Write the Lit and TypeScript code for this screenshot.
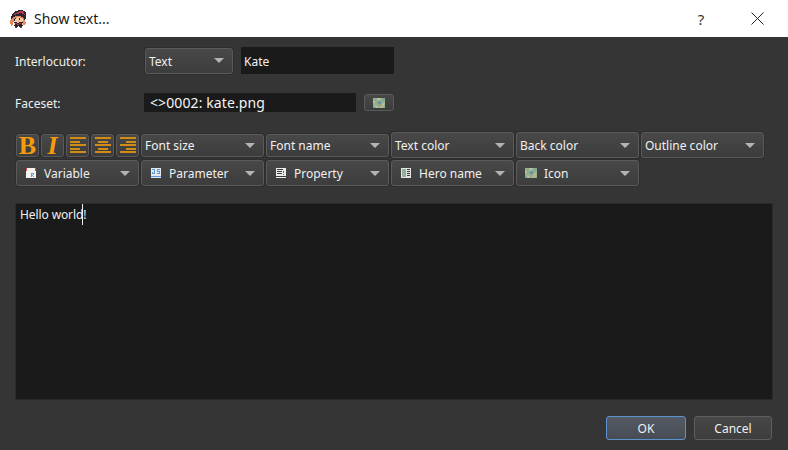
import { LitElement, html, css, svg } from 'lit';
import { customElement } from 'lit/decorators.js';

// pixel sprite helper: each char of a row maps to a palette colour
const sprite = (rows: string[], palette: Record<string, string>) =>
  rows.map((row, y) =>
    [...row].map((c, x) =>
      palette[c] ? svg`<rect x=${x} y=${y} width="1" height="1" fill=${palette[c]}></rect>` : null));

const KATE = sprite([
  '........kkkkk.....',
  '.....kkkkrrrrkk...',
  '....kkkrrrrrrrkk..',
  '...kkrrrrkkkrrkk..',
  '..kkrrkkkkkkkkrk..',
  '..kkkkkkkkkkkkkk..',
  '.kkkkooooookkkkk..',
  '.kkoooofffoookkk..',
  '.koookfffkffookk..',
  '.oookffffkfffok...',
  'ooookffffffffoo...',
  'oooo.fffpfffooo...',
  'ooo.kkkffkkkkooo..',
  'ooo.frrkkrrkfooo..',
  '.oo.fkkrrkkkfoo...',
  '.o..kkkkkkkkk.....',
  '.....kkk.kkk......',
  '.....dd...dd......',
], { k: '#2a2430', d: '#5a4a58', r: '#b83a48', f: '#f6cda6', o: '#e5875f', p: '#d89078' });

const VARIABLE = sprite([
  'rwwwwwwwwr',
  'rwwwwwwwwr',
  'rwwwwwwwwr',
  'wwwwwwwwww',
  'wwwwwwwwww',
  'wwwwwbbbww',
  'wwwwwbwbww',
  'wwwwwbbwww',
  'wwwwwbwbww',
  'wwwwwwwwww',
], { w: '#f6f2ee', r: '#d04848', b: '#6a9cd0' });

const PARAMETER = sprite([
  'wwwwwwwwww',
  'wbbbwwbbbw',
  'wwwbwwbwww',
  'wwwbwwbbbw',
  'wbwbwwwwbw',
  'wbbbwwbbbw',
  'wwwwwwwwww',
  'wwwwwwwwww',
  'bbbbbbbbbb',
  'wwwwwwwwww',
], { w: '#e4e9ee', b: '#5a9ad8' });

const PROPERTY = sprite([
  'wwwwwwwwww',
  'wkkkkkkwww',
  'wwwwwwwwww',
  'wkkkkkwrww',
  'wwwwwwwrww',
  'wkkkkkwwww',
  'wwwwwwwrww',
  'wwwwwwwwww',
  'kkkkkkkkkk',
  'wwwwwwwwww',
], { w: '#ececec', k: '#3a3a3a', r: '#c83838' });

const HERO = sprite([
  'wwwwwwwwww',
  'wggggwkkkw',
  'wggggwwwww',
  'wggggwkkkw',
  'wggggwwwww',
  'wggggwkkkw',
  'wggggwwwww',
  'wggggwkkkw',
  'wggggwwwww',
  'wwwwwwwwww',
], { w: '#e4e4e4', k: '#3a3a3a', g: '#8fb09a' });

const MAP = sprite([
  'gggghhhgggss',
  'ggggghhggsss',
  'ysggggggggsg',
  'yysgggbbgggg',
  'yyggbbbbgggg',
  'gggggbbbggyy',
  'ggggggbggyyg',
  'shgggggggygg',
  'sshhgggggyyg',
  'ssshgggyyggg',
], { g: '#93b18e', h: '#b6c9a0', s: '#7ea59c', y: '#cdbd82', b: '#6d91a6' });

const pixelIcon = (content: unknown, w = 10, h = 10) => html`
  <svg class="pix" width=${w} height=${h} viewBox="0 0 ${w} ${h}" shape-rendering="crispEdges">${content}</svg>`;

@customElement('app-root')
export class AppRoot extends LitElement {
  static styles = css`
    :host {
      display: flex;
      flex-direction: column;
      width: 788px;
      height: 450px;
      background: #353535;
      color: #f0f0f0;
      font-family: "Noto Sans", "Open Sans", sans-serif;
      font-size: 12px;
      overflow: hidden;
    }
    .titlebar {
      display: flex;
      align-items: center;
      height: 37px;
      flex: none;
      background: #fff;
      color: #1a1a1a;
      font-size: 14px;
      padding-left: 10px;
    }
    .titlebar .title { margin-left: 6px; flex: 1; }
    .titlebar .help { width: 16px; text-align: center; font-size: 15px; margin-right: 42px; color: #333; }
    .titlebar .close { margin-right: 24px; display: block; }
    .form {
      flex: 1;
      display: flex;
      flex-direction: column;
      padding: 10px 15px 10px 15px;
    }
    .row { display: flex; align-items: center; }
    .row .label { width: 130px; padding-top: 2px; }
    .interlocutor { height: 27px; }
    .faceset { height: 19px; margin-top: 19px; }
    .combo, .tool {
      box-sizing: border-box;
      border: 1px solid #5a5a5a;
      border-radius: 3px;
      background: linear-gradient(#484848, #3c3c3c);
      box-shadow: 0 0 0 1px #2e2e2e;
    }
    .combo {
      display: flex;
      align-items: center;
      height: 26px;
      padding-left: 3px;
      padding-right: 8px;
      white-space: nowrap;
    }
    .combo .arrow {
      margin-left: auto;
      width: 0;
      height: 0;
      border-left: 5px solid transparent;
      border-right: 5px solid transparent;
      border-top: 5px solid #b4b4b4;
    }
    .combo.small { height: 23px; }
    .combo .pix { margin: 0 8px 0 6px; }
    .combo .pix.wide { margin: 0 7px 0 5px; }
    .who { width: 88px; padding-top: 2px; }
    .who .arrow { margin-top: -2px; }
    .field {
      box-sizing: border-box;
      background: #1a1a1a;
      color: #f4f4f4;
    }
    .name { width: 153px; height: 27px; margin-left: 8px; line-height: 29px; padding-left: 3px; font-size: 12px; }
    .face {
      width: 212px;
      height: 19px;
      margin-left: -1px;
      line-height: 19px;
      padding-left: 6px;
      font-size: 14px;
      letter-spacing: 0.1px;
      white-space: nowrap;
    }
    .pick {
      box-sizing: border-box;
      display: flex;
      align-items: center;
      justify-content: center;
      width: 30px;
      height: 17px;
      margin-left: 8px;
      border: 1px solid #5a5a5a;
      border-radius: 3px;
      background: linear-gradient(#484848, #3c3c3c);
    }
    .toolbar {
      display: grid;
      grid-template-columns: repeat(6, 123px);
      column-gap: 2px;
      row-gap: 2px;
      margin: 20px 0 0 1px;
      align-items: center;
    }
    .styles { display: flex; gap: 2px; }
    .tool {
      display: flex;
      align-items: center;
      justify-content: center;
      width: 23px;
      height: 23px;
      color: #f59b0d;
    }
    .tool.b { font: bold 26px/23px "Liberation Serif", serif; }
    .tool.i { font: italic bold 26px/23px "Liberation Serif", serif; }
    .tool svg { display: block; }
    .editor {
      box-sizing: border-box;
      height: 197px;
      margin-top: 17px;
      padding: 3px 4px;
      background: #1a1a1a;
      border: 1px solid #2a2a2a;
      line-height: 16px;
      letter-spacing: -0.1px;
      width: 758px;
    }
    .editor .caret { border-left: 1px solid #f0f0f0; margin-left: -1px; padding: 2px 0; }
    .actions { display: flex; justify-content: flex-end; gap: 8px; margin: 16px 1px 0 0; }
    .btn {
      box-sizing: border-box;
      height: 24px;
      border: 1px solid #5e5e5e;
      border-radius: 3px;
      background: linear-gradient(#474747, #3d3d3d);
      text-align: center;
      line-height: 23px;
      width: 78px;
    }
    .btn.ok {
      width: 80px;
      border-color: #5a94d0;
      background: linear-gradient(#545a64, #474c54);
    }
  `;

  private _combo(label: string, icon?: unknown, small = false, cls = '') {
    return html`<div class="combo ${small ? 'small' : ''} ${cls}">
      ${icon ? pixelIcon(icon) : null}<span>${label}</span><span class="arrow"></span>
    </div>`;
  }

  private _align(lines: number[][]) {
    return html`<div class="tool">
      <svg width="16" height="16" viewBox="0 0 16 16" shape-rendering="crispEdges">
        ${lines.map(([x, w], i) => svg`<rect x=${x} y=${i * 3.5} width=${w} height="2" fill="#d08c14"></rect>`)}
      </svg>
    </div>`;
  }

  render() {
    return html`
      <div class="titlebar">
        <svg width="18" height="18" viewBox="0 0 18 18" shape-rendering="crispEdges">${KATE}</svg>
        <span class="title">Show text...</span>
        <span class="help">?</span>
        <svg class="close" width="13" height="13" viewBox="0 0 13 13">
          <path d="M0.5 0.5L12.5 12.5M12.5 0.5L0.5 12.5" stroke="#222" stroke-width="1" fill="none"></path>
        </svg>
      </div>
      <div class="form">
        <div class="row interlocutor">
          <span class="label">Interlocutor:</span>
          ${this._combo('Text', undefined, false, 'who')}
          <div class="field name">Kate</div>
        </div>
        <div class="row faceset">
          <span class="label">Faceset:</span>
          <div class="field face">&lt;&gt;0002: kate.png</div>
          <div class="pick">${pixelIcon(MAP, 12, 10)}</div>
        </div>
        <div class="toolbar">
          <div class="styles">
            <div class="tool b">B</div>
            <div class="tool i">I</div>
            ${this._align([[0, 16], [0, 10], [0, 16], [0, 10], [0, 16]])}
            ${this._align([[0, 16], [3, 10], [0, 16], [3, 10], [0, 16]])}
            ${this._align([[0, 16], [6, 10], [0, 16], [6, 10], [0, 16]])}
          </div>
          ${this._combo('Font size', undefined, true)}
          ${this._combo('Font name', undefined, true)}
          ${this._combo('Text color')}
          ${this._combo('Back color')}
          ${this._combo('Outline color')}
          ${this._combo('Variable', VARIABLE)}
          ${this._combo('Parameter', PARAMETER)}
          ${this._combo('Property', PROPERTY)}
          ${this._combo('Hero name', HERO)}
          <div class="combo">
            <svg class="pix wide" width="12" height="10" viewBox="0 0 12 10" shape-rendering="crispEdges">${MAP}</svg>
            <span>Icon</span><span class="arrow"></span>
          </div>
        </div>
        <div class="editor">Hello world<span class="caret"></span>!</div>
        <div class="actions">
          <div class="btn ok">OK</div>
          <div class="btn">Cancel</div>
        </div>
      </div>
    `;
  }
}
